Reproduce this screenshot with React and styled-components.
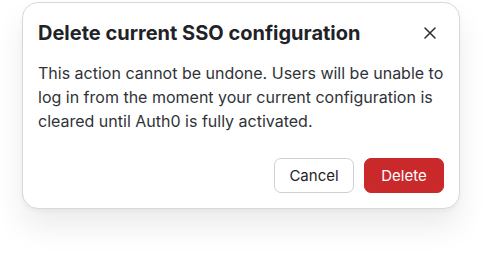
import React from "react";
import styled, { createGlobalStyle } from "styled-components";

const GlobalStyle = createGlobalStyle`
  body {
    margin: 0;
    background: #ffffff;
    font-family: Inter, "Noto Sans", sans-serif;
  }
`;

const Page = styled.div`
  width: 482px;
  height: 267px;
  padding: 2px 0 0 22px;
  box-sizing: border-box;
`;

const Dialog = styled.div`
  width: 438px;
  box-sizing: border-box;
  background: #ffffff;
  border: 1px solid #d6d9de;
  border-radius: 16px;
  padding: 15px 15px 15px 15px;
  box-shadow: 0 18px 30px rgba(0, 0, 0, 0.08), 0 2px 4px rgba(0, 0, 0, 0.04);
`;

const Header = styled.div`
  display: flex;
  align-items: center;
  justify-content: space-between;
  height: 30px;
`;

const Title = styled.h2`
  margin: 0;
  font-size: 20px;
  font-weight: 700;
  color: #1f2328;
`;

const CloseButton = styled.button`
  border: none;
  background: none;
  padding: 0;
  margin-right: 6px;
  width: 16px;
  height: 16px;
  display: flex;
  align-items: center;
  justify-content: center;
  color: #2a2d31;
  cursor: pointer;
`;

const Body = styled.p`
  margin: 13px 0 0 0;
  font-size: 16px;
  line-height: 24px;
  color: #2f3338;
`;

const Actions = styled.div`
  display: flex;
  justify-content: flex-end;
  gap: 10px;
  margin-top: 25px;
`;

const Button = styled.button`
  height: 35px;
  width: 80px;
  padding: 0;
  border-radius: 7px;
  font-family: Inter, "Noto Sans", sans-serif;
  font-size: 15px;
  font-weight: 400;
  cursor: pointer;
  border: 1px solid ${(p) => (p.$danger ? "#c9292b" : "#ccd1d8")};
  background: ${(p) => (p.$danger ? "#c9292b" : "#ffffff")};
  color: ${(p) => (p.$danger ? "#ffffff" : "#1f2328")};
`;

export default function App() {
  return (
    <>
      <GlobalStyle />
      <Page>
        <Dialog>
          <Header>
            <Title>Delete current SSO configuration</Title>
            <CloseButton aria-label="Close">
              <svg width="12" height="12" viewBox="0 0 12 12" fill="none">
                <path d="M1 1L11 11M11 1L1 11" stroke="currentColor" strokeWidth="1.5" strokeLinecap="round" />
              </svg>
            </CloseButton>
          </Header>
          <Body>
            This action cannot be undone. Users will be unable to log in from the moment your current configuration is
            cleared until Auth0 is fully activated.
          </Body>
          <Actions>
            <Button>Cancel</Button>
            <Button $danger>Delete</Button>
          </Actions>
        </Dialog>
      </Page>
    </>
  );
}
